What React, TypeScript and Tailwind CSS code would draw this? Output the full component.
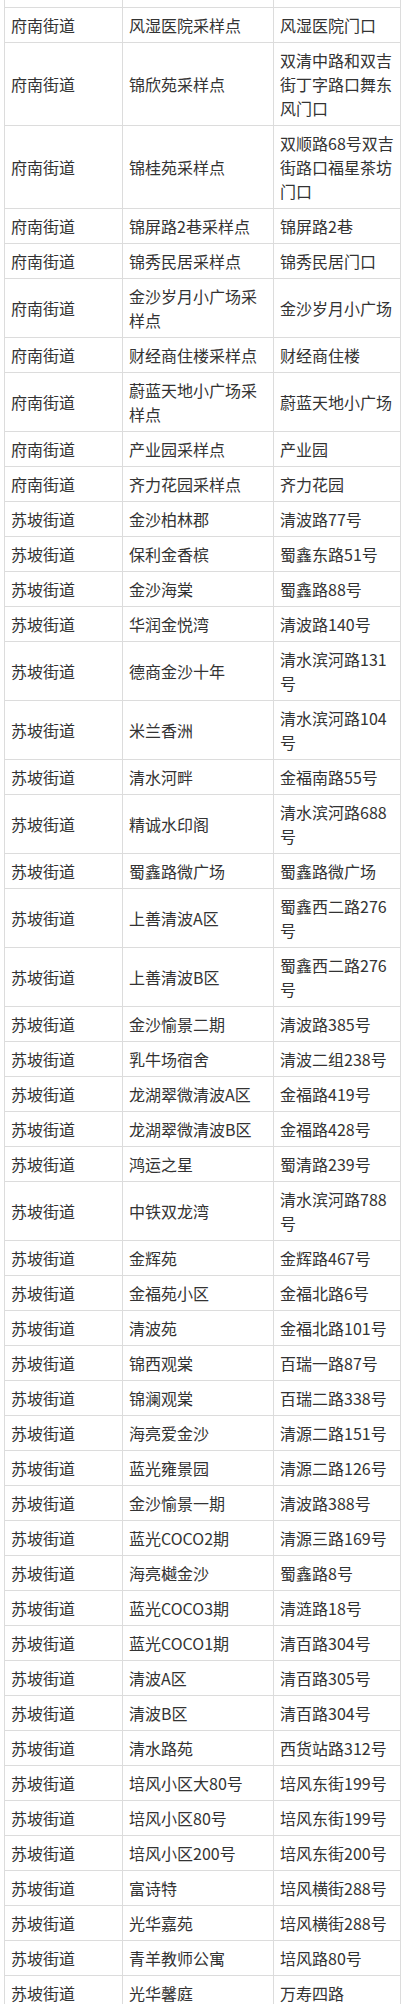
const rows: [string, string, string][] = [
  ['府南街道', '风湿医院采样点', '风湿医院门口'],
  ['府南街道', '锦欣苑采样点', '双清中路和双吉街丁字路口舞东风门口'],
  ['府南街道', '锦桂苑采样点', '双顺路68号双吉街路口福星茶坊门口'],
  ['府南街道', '锦屏路2巷采样点', '锦屏路2巷'],
  ['府南街道', '锦秀民居采样点', '锦秀民居门口'],
  ['府南街道', '金沙岁月小广场采样点', '金沙岁月小广场'],
  ['府南街道', '财经商住楼采样点', '财经商住楼'],
  ['府南街道', '蔚蓝天地小广场采样点', '蔚蓝天地小广场'],
  ['府南街道', '产业园采样点', '产业园'],
  ['府南街道', '齐力花园采样点', '齐力花园'],
  ['苏坡街道', '金沙柏林郡', '清波路77号'],
  ['苏坡街道', '保利金香槟', '蜀鑫东路51号'],
  ['苏坡街道', '金沙海棠', '蜀鑫路88号'],
  ['苏坡街道', '华润金悦湾', '清波路140号'],
  ['苏坡街道', '德商金沙十年', '清水滨河路131号'],
  ['苏坡街道', '米兰香洲', '清水滨河路104号'],
  ['苏坡街道', '清水河畔', '金福南路55号'],
  ['苏坡街道', '精诚水印阁', '清水滨河路688号'],
  ['苏坡街道', '蜀鑫路微广场', '蜀鑫路微广场'],
  ['苏坡街道', '上善清波A区', '蜀鑫西二路276号'],
  ['苏坡街道', '上善清波B区', '蜀鑫西二路276号'],
  ['苏坡街道', '金沙愉景二期', '清波路385号'],
  ['苏坡街道', '乳牛场宿舍', '清波二组238号'],
  ['苏坡街道', '龙湖翠微清波A区', '金福路419号'],
  ['苏坡街道', '龙湖翠微清波B区', '金福路428号'],
  ['苏坡街道', '鸿运之星', '蜀清路239号'],
  ['苏坡街道', '中铁双龙湾', '清水滨河路788号'],
  ['苏坡街道', '金辉苑', '金辉路467号'],
  ['苏坡街道', '金福苑小区', '金福北路6号'],
  ['苏坡街道', '清波苑', '金福北路101号'],
  ['苏坡街道', '锦西观棠', '百瑞一路87号'],
  ['苏坡街道', '锦澜观棠', '百瑞二路338号'],
  ['苏坡街道', '海亮爱金沙', '清源二路151号'],
  ['苏坡街道', '蓝光雍景园', '清源二路126号'],
  ['苏坡街道', '金沙愉景一期', '清波路388号'],
  ['苏坡街道', '蓝光COCO2期', '清源三路169号'],
  ['苏坡街道', '海亮樾金沙', '蜀鑫路8号'],
  ['苏坡街道', '蓝光COCO3期', '清涟路18号'],
  ['苏坡街道', '蓝光COCO1期', '清百路304号'],
  ['苏坡街道', '清波A区', '清百路305号'],
  ['苏坡街道', '清波B区', '清百路304号'],
  ['苏坡街道', '清水路苑', '西货站路312号'],
  ['苏坡街道', '培风小区大80号', '培风东街199号'],
  ['苏坡街道', '培风小区80号', '培风东街199号'],
  ['苏坡街道', '培风小区200号', '培风东街200号'],
  ['苏坡街道', '富诗特', '培风横街288号'],
  ['苏坡街道', '光华嘉苑', '培风横街288号'],
  ['苏坡街道', '青羊教师公寓', '培风路80号'],
  ['苏坡街道', '光华馨庭', '万寿四路'],
];

const cell = 'border border-[#dcdcdc] px-[6px] py-[5px] align-middle break-all';

export default function App() {
  return (
    <div
      className="h-[2004px] overflow-hidden bg-white pl-[4px] text-[16px] leading-[24px] text-[#333333]"
      style={{ fontFamily: '"Noto Sans CJK SC", "Noto Sans", sans-serif' }}
    >
      <table className="w-[396px] table-fixed border-collapse">
        <colgroup>
          <col className="w-[118px]" />
          <col className="w-[151px]" />
          <col className="w-[127px]" />
        </colgroup>
        <tbody>
          {/* tail of the row above, cut off by the screenshot */}
          <tr className="h-[7px]">
            <td className="border-x border-b border-[#dcdcdc] p-0" />
            <td className="border-x border-b border-[#dcdcdc] p-0" />
            <td className="border-x border-b border-[#dcdcdc] p-0" />
          </tr>
          {rows.map(([street, point, address], i) => (
            <tr key={i}>
              <td className={cell}>{street}</td>
              <td className={cell}>{point}</td>
              <td className={cell}>{address}</td>
            </tr>
          ))}
        </tbody>
      </table>
    </div>
  );
}
